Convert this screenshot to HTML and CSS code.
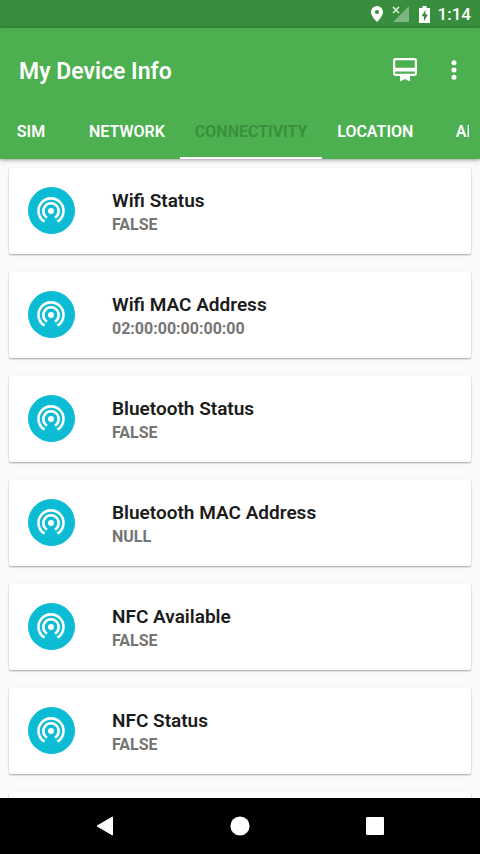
FILE: index.html
```html
<!DOCTYPE html>
<html lang="en">
<head>
<meta charset="utf-8">
<meta name="viewport" content="width=device-width, initial-scale=1">
<title>My Device Info</title>
<link rel="stylesheet" href="styles.css">
</head>
<body>
<svg class="defs" aria-hidden="true">
  <symbol id="tether" viewBox="0 0 47 47">
    <circle cx="23.5" cy="23.5" r="23.5" fill="#0bbcd4"/>
    <g fill="none" stroke="#fff" stroke-width="2.6">
      <path d="M16.6 34.600A12.500 12.500 0 1 1 29.400 34.600"/>
      <path d="M19 30.600A7.700 7.700 0 1 1 27 30.600"/>
    </g>
    <circle cx="23" cy="24" r="3" fill="#fff"/>
  </symbol>
</svg>
<div class="screen">
  <div class="status">
    <svg class="pin" viewBox="0 0 12 16"><path fill="#fff" fill-rule="evenodd" d="M6 0a6 6 0 0 0-6 6c0 4.400 6 10 6 10s6-5.600 6-10a6 6 0 0 0-6-6zm0 3.900a2.100 2.100 0 1 1 0 4.200 2.100 2.100 0 0 1 0-4.200z"/></svg>
    <svg class="signal" viewBox="0 0 18 18"><path fill="#fff" opacity=".35" d="M17 1v16H1z"/><path stroke="#e4f3e5" stroke-width="1.500" d="M1 2l6 6M7 2L1 8"/></svg>
    <svg class="battery" viewBox="0 0 11 17"><path fill="#fff" d="M3.500 0h4v2H11v15H0V2h3.500z"/><path fill="#388e3c" d="M6.500 4L2.500 10.200H5V15l4-6.500H6.500z"/></svg>
    <span class="clock">1:14</span>
  </div>
  <header class="header">
    <div class="toolbar">
      <h1>My Device Info</h1>
      <button class="action" aria-label="Membership"><svg width="24" height="24" viewBox="0 0 24 24"><path fill="#fff" fill-rule="evenodd" d="M2.400 0h19.200A2.400 2.400 0 0 1 24 2.400v13.200a2.400 2.400 0 0 1-2.400 2.400H17v5.500l-5-2.500-5 2.500V18H2.400A2.400 2.400 0 0 1 0 15.600V2.400A2.400 2.400 0 0 1 2.400 0zM2.200 13.500v2.300h19.600v-2.300zM2.200 2.200v7.600h19.600V2.200z"/></svg></button>
      <button class="action more" aria-label="More options"><svg width="6" height="20" viewBox="0 0 6 20" fill="#fff"><circle cx="3" cy="2.700" r="2.500"/><circle cx="3" cy="10" r="2.500"/><circle cx="3" cy="17.300" r="2.500"/></svg></button>
    </div>
    <nav class="tabs" aria-label="Sections">
      <button class="tab first">SIM</button>
      <button class="tab">NETWORK</button>
      <button class="tab active">CONNECTIVITY</button>
      <button class="tab">LOCATION</button>
      <button class="tab">APP</button>
    </nav>
  </header>
  <main class="list">
    <article class="card"><svg class="icon"><use href="#tether"/></svg><div><h2>Wifi Status</h2><p>FALSE</p></div></article>
    <article class="card"><svg class="icon"><use href="#tether"/></svg><div><h2>Wifi MAC Address</h2><p>02:00:00:00:00:00</p></div></article>
    <article class="card"><svg class="icon"><use href="#tether"/></svg><div><h2>Bluetooth Status</h2><p>FALSE</p></div></article>
    <article class="card"><svg class="icon"><use href="#tether"/></svg><div><h2>Bluetooth MAC Address</h2><p>NULL</p></div></article>
    <article class="card"><svg class="icon"><use href="#tether"/></svg><div><h2>NFC Available</h2><p>FALSE</p></div></article>
    <article class="card"><svg class="icon"><use href="#tether"/></svg><div><h2>NFC Status</h2><p>FALSE</p></div></article>
    <article class="card"></article>
  </main>
  <nav class="system" aria-label="System">
    <button aria-label="Back"><svg width="20" height="20" viewBox="0 0 20 20"><path fill="#fff" stroke="#fff" stroke-linejoin="round" d="M2 10L17.500 1v18z"/></svg></button>
    <button aria-label="Home"><svg width="20" height="20" viewBox="0 0 20 20"><circle cx="10" cy="10" r="9.600" fill="#fff"/></svg></button>
    <button aria-label="Recent apps"><svg width="20" height="20" viewBox="0 0 20 20"><rect x="1" y="1" width="18" height="18" rx="1" fill="#fff"/></svg></button>
  </nav>
</div>
</body>
</html>
```
FILE: styles.css
```css
* { box-sizing: border-box; }
body { margin: 0; font-family: Roboto, sans-serif; background: #fafafa; }
h1, h2, p { margin: 0; }
button { border: 0; padding: 0; margin: 0; background: none; font: inherit; color: inherit; cursor: pointer; }
svg { display: block; flex: none; }
.defs { position: absolute; width: 0; height: 0; }
.screen { display: flex; flex-direction: column; height: 100vh; overflow: hidden; }

.status { flex: none; display: flex; align-items: center; justify-content: flex-end; height: 28px; padding-right: 9px; background: #388e3c; color: #fff; }
.pin { width: 12px; height: 16px; margin-right: 9px; }
.signal { width: 18px; height: 18px; margin-right: 9px; }
.battery { width: 11px; height: 17px; margin-right: 8px; }
.clock { font-size: 17px; font-weight: 500; line-height: 28px; }

.header { flex: none; position: relative; background: #4caf50; color: #fff; box-shadow: 0 1px 4px rgba(0, 0, 0, .4); }
.toolbar { display: flex; align-items: center; height: 84px; padding: 0 14px 0 19px; }
h1 { flex: 1; padding-top: 4px; font-size: 23px; font-weight: 600; line-height: 28px; }
.action { display: grid; place-items: center; width: 48px; height: 48px; }
.more { width: 24px; margin-left: 13px; }
.tabs { display: flex; height: 47px; margin: 0 11px 0 10px; overflow: hidden; }
.tab { flex: none; min-width: 86px; height: 47px; padding: 0 15px 6px; border-bottom: 2px solid transparent; font-size: 16px; font-weight: 600; line-height: 38px; text-align: center; }
.first { margin-left: -22px; }
.active { color: #388e3c; border-color: #fff; }

.list { flex: 1; min-height: 0; overflow: hidden; display: flex; flex-direction: column; gap: 18px; padding: 9px 9px 0; }
.card { flex: none; display: flex; align-items: flex-start; gap: 37px; min-height: 86px; padding: 19px 19px 17px; background: #fff; border-radius: 2px; box-shadow: 0 1px 2px rgba(0, 0, 0, .36); }
.icon { width: 47px; height: 47px; }
.card div { padding-top: 2px; }
h2 { font-size: 19px; font-weight: 600; line-height: 24px; color: #1b1b1b; }
.card p { font-size: 16px; font-weight: 700; line-height: 24px; color: #757575; }

.system { flex: none; position: relative; display: flex; justify-content: center; gap: 87px; height: 56px; background: #000; }
.system button { display: grid; place-items: center; width: 48px; height: 56px; }
```
